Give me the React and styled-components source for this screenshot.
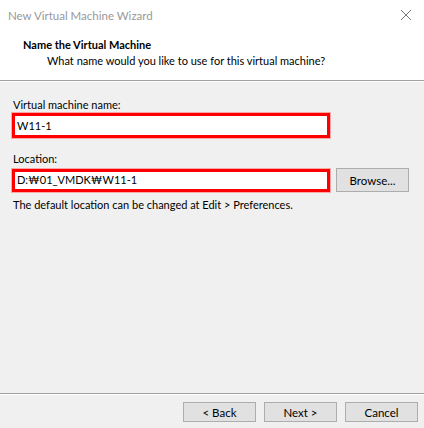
import styled, { createGlobalStyle } from "styled-components";

const GlobalStyle = createGlobalStyle`
  html, body {
    margin: 0;
    padding: 0;
    background: #f0f0f0;
  }
  body {
    font-family: Lato, "Noto Sans", sans-serif;
    font-size: 11px;
    color: #000;
  }
`;

const Window = styled.div`
  width: 424px;
  height: 428px;
  display: flex;
  flex-direction: column;
  background: #f0f0f0;
  overflow: hidden;
`;

const TitleBar = styled.div`
  height: 30px;
  display: flex;
  align-items: center;
  justify-content: space-between;
  padding: 0 10px 0 8px;
  background: #fff;
  color: #999;
  font-size: 11.5px;
`;

const Close = styled.div`
  width: 12px;
  height: 12px;
  display: flex;
  margin-right: 2px;
`;

const Header = styled.div`
  height: 51px;
  background: #fff;
  border-bottom: 1px solid #a0a0a0;
  box-shadow: 0 1px 0 #fff;
  padding: 7px 0 0 23px;
  box-sizing: border-box;
`;

const HeaderTitle = styled.div`
  font-weight: bold;
  line-height: 16px;
`;

const HeaderSub = styled.div`
  padding-left: 24px;
  line-height: 16px;
`;

const Body = styled.div`
  flex: 1;
  padding: 16px 0 0 12px;
  display: flex;
  flex-direction: column;
`;

const Label = styled.div`
  line-height: 16px;
  padding-left: 1px;
  margin-bottom: ${(p) => p.$gap || 0}px;
`;

const Row = styled.div`
  display: flex;
  align-items: center;
  gap: 6px;
`;

const Field = styled.div`
  width: 318px;
  height: ${(p) => p.$h}px;
  box-sizing: border-box;
  border: 3px solid #f00;
  box-shadow: 0 0 0 1px rgba(255, 120, 120, 0.6);
  background: #fff;
  display: flex;
  align-items: center;
  padding-left: 2px;
  line-height: 16px;
  margin-bottom: ${(p) => p.$mb || 0}px;
`;

const Button = styled.button`
  width: ${(p) => p.$w || 73}px;
  height: ${(p) => p.$h || 20}px;
  background: #e1e1e1;
  border: 1px solid #adadad;
  font-family: inherit;
  font-size: 11.5px;
  color: #000;
  padding: 0;
  margin: 0;
`;

const Hint = styled.div`
  margin-top: 5px;
  padding-left: 1px;
  line-height: 16px;
`;

const Footer = styled.div`
  height: 35px;
  border-top: 1px solid #a0a0a0;
  box-shadow: inset 0 1px 0 #fff;
  display: flex;
  justify-content: flex-end;
  align-items: flex-start;
  gap: 8px;
  padding: 8px 6px 0 0;
  box-sizing: border-box;
`;

export default function App() {
  return (
    <>
      <GlobalStyle />
      <Window>
        <TitleBar>
          <span>New Virtual Machine Wizard</span>
          <Close>
            <svg width="12" height="12" viewBox="0 0 12 12">
              <path d="M1 1L11 11M11 1L1 11" stroke="#777" strokeWidth="1" />
            </svg>
          </Close>
        </TitleBar>
        <Header>
          <HeaderTitle>Name the Virtual Machine</HeaderTitle>
          <HeaderSub>What name would you like to use for this virtual machine?</HeaderSub>
        </Header>
        <Body>
          <Label>Virtual machine name:</Label>
          <Field $h={25} $mb={13}>W11-1</Field>
          <Label $gap={1}>Location:</Label>
          <Row>
            <Field $h={23}>D:₩01_VMDK₩W11-1</Field>
            <Button $w={73} $h={24}>Browse...</Button>
          </Row>
          <Hint>The default location can be changed at Edit &gt; Preferences.</Hint>
        </Body>
        <Footer>
          <Button>&lt; Back</Button>
          <Button>Next &gt;</Button>
          <Button>Cancel</Button>
        </Footer>
      </Window>
    </>
  );
}
